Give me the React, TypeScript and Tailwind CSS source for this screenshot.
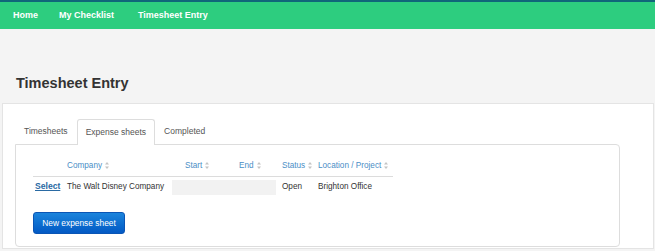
import React from "react";

function SortIcon() {
  return (
    <svg width="4" height="7" viewBox="0 0 4 7" className="ml-[3px] inline-block">
      <path d="M2 0 L4 2.5 L0 2.5 Z" fill="#c4c4c4" />
      <path d="M2 7 L4 4.5 L0 4.5 Z" fill="#c4c4c4" />
    </svg>
  );
}

function Th({ label, className }: { label: string; className: string }) {
  return (
    <div className={"flex items-center text-[#4a8ec6] " + className}>
      {label}
      <SortIcon />
    </div>
  );
}

export default function App() {
  return (
    <div className="min-h-[251px] bg-[#f4f4f4] font-['Liberation_Sans',Arial,sans-serif] text-[#333]">
      <div className="h-[2px] bg-[#10667a]" />
      <nav className="flex h-[27px] items-center bg-[#2dcd7f] pl-[13px] text-[9px] font-bold text-white">
        <span className="w-[46px]">Home</span>
        <span className="w-[79px]">My Checklist</span>
        <span>Timesheet Entry</span>
      </nav>

      <div className="h-[74px] pl-[16px] pt-[46px]">
        <h1 className="text-[14.5px] font-bold leading-[17px] text-[#333]">Timesheet Entry</h1>
      </div>

      <div className="ml-[2px] w-[652px] border border-[#e4e4e4] bg-white pb-[1px] pl-[12px] pt-[15px]">
        <div className="flex h-[25px] items-stretch text-[8.5px] text-[#555]">
          <div className="flex items-center px-[9px]">Timesheets</div>
          <div className="relative z-10 mb-[-1px] flex items-center rounded-t-[3px] border border-b-0 border-[#ddd] bg-white px-[8px] text-[#555]">
            Expense sheets
          </div>
          <div className="flex items-center px-[9px]">Completed</div>
        </div>

        <div className="w-[605px] rounded-b-[4px] rounded-tr-[4px] border border-[#ddd] pb-[12px] pl-[17px] pt-[11px] text-[8.2px]">
          <div className="flex h-[21px] w-[360px] items-center border-b border-[#dcdcdc]">
            <div className="w-[32px]" />
            <Th label="Company" className="w-[107px] pl-[2px]" />
            <Th label="Start" className="w-[55px] pl-[13px]" />
            <Th label="End" className="w-[49px] pl-[12px]" />
            <Th label="Status" className="w-[40px] pl-[6px]" />
            <Th label="Location / Project" className="w-[77px] pl-[2px]" />
          </div>
          <div className="flex h-[20px] w-[360px] items-center">
            <div className="w-[32px] pl-[2px]">
              <span className="text-[8.6px] font-bold text-[#2a6aa3] underline">Select</span>
            </div>
            <div className="w-[107px] pl-[2px]">The Walt Disney Company</div>
            <div className="h-[15px] w-[104px] bg-[#f2f2f2]" />
            <div className="w-[40px] pl-[6px]">Open</div>
            <div className="w-[77px] pl-[2px]">Brighton Office</div>
          </div>
          <button className="mt-[15px] flex h-[22px] w-[92px] items-center justify-center rounded-[3px] border border-[#0a55b5] bg-gradient-to-b from-[#1b84dc] to-[#0459c4] text-[8.4px] text-white">
            New expense sheet
          </button>
        </div>
      </div>
    </div>
  );
}
